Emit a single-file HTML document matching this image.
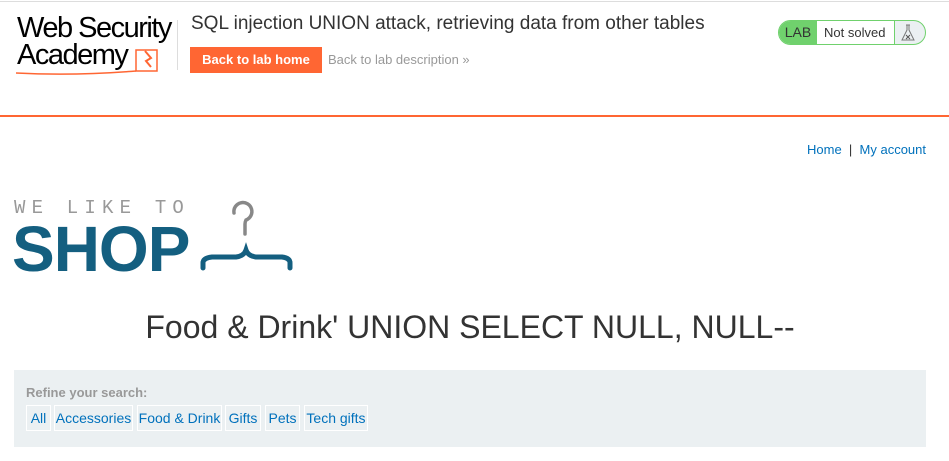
<!DOCTYPE html>
<html><head><style>
*{margin:0;padding:0;box-sizing:border-box}
body{width:949px;height:461px;overflow:hidden;background:#fff;font-family:"Liberation Sans",Arial,sans-serif;position:relative}
.abs{position:absolute}
.tag{position:absolute;top:405px;height:26px;border:1px solid #fff;color:#0071bc;font-size:14px;line-height:24px;text-align:center}
</style></head><body>
<div class="abs" style="left:0;top:1px;width:949px;height:1px;background:#ddd"></div>
<div class="abs" style="left:17px;top:15px;font-size:29px;line-height:27px;color:#000;letter-spacing:-1.5px">Web Security<br>Academy</div>
<svg class="abs" style="left:14px;top:46px" width="150" height="30"><path d="M122 4 L122 25 L143 25 L143 4 Z" fill="none" stroke="#ff6633" stroke-width="1.5"/><path d="M131 5 L137 12 L132 15 L137 21" fill="none" stroke="#ff6633" stroke-width="2"/><path d="M2 27 Q60 30 122 25" fill="none" stroke="#ff6633" stroke-width="1.5"/></svg>
<div class="abs" style="left:177px;top:20px;width:1px;height:50px;background:#ddd"></div>
<div class="abs" style="left:191px;top:13px;font-size:19px;color:#333">SQL injection UNION attack, retrieving data from other tables</div>
<div class="abs" style="left:190px;top:47px;width:132px;height:26px;background:#ff6633;color:#fff;font-weight:bold;font-size:13px;line-height:26px;text-align:center">Back to lab home</div>
<div class="abs" style="left:328px;top:52px;font-size:13px;color:#999">Back to lab description &#187;</div>
<div class="abs" style="left:778px;top:20px;width:148px;height:25px;border:1px solid #70d16d;border-radius:13px;overflow:hidden;background:#ebf0f2">
<div class="abs" style="left:0;top:0;width:38px;height:23px;background:#70d16d;color:#333;font-size:14px;line-height:23px;text-align:center">LAB</div>
<div class="abs" style="left:38px;top:0;width:78px;height:23px;background:#fff;border-right:1px solid #70d16d;color:#333;font-size:13px;line-height:23px;padding-left:7px">Not solved</div>
<svg class="abs" style="left:121px;top:3px" width="16" height="18"><path d="M6 1h4M7 1v5L2 16h12L9 6V1" fill="none" stroke="#777" stroke-width="1"/><path d="M6 11l4 4M10 11l-4 4" stroke="#555"/></svg>
</div>
<div class="abs" style="left:0;top:115px;width:949px;height:2px;background:#ff6633"></div>
<div class="abs" style="left:807px;top:142px;font-size:13px;color:#0071bc">Home &nbsp;<span style="color:#333">|</span>&nbsp; My account</div>
<div class="abs" style="left:14px;top:197px;font-family:'Liberation Mono',monospace;font-size:19px;letter-spacing:6.2px;color:#999">WE LIKE TO</div>
<div class="abs" style="left:12px;top:212px;font-weight:bold;font-size:64px;color:#145f80;letter-spacing:-1px">SHOP</div>
<svg class="abs" style="left:198px;top:200px" width="100" height="72"><path d="M36 13 A9 9 0 1 1 48 20 Q47 22 47 24 V34" fill="none" stroke="#888" stroke-width="3.5" stroke-linecap="round"/><path d="M5 68 V63 Q5 58 14 57 L38 57 Q46 56 48 50 Q50 56 58 57 L84 57 Q92 58 92 63 V68" fill="none" stroke="#145f80" stroke-width="5" stroke-linecap="round"/></svg>
<div class="abs" style="left:0;top:309px;width:940px;text-align:center;font-size:32px;color:#333">Food &amp; Drink' UNION SELECT NULL, NULL--</div>
<div class="abs" style="left:14px;top:370px;width:912px;height:77px;background:#ebf0f2"></div>
<div class="abs" style="left:26px;top:385px;font-size:13px;font-weight:bold;color:#999">Refine your search:</div>
<div class="tag" style="left:26px;width:25px">All</div>
<div class="tag" style="left:54px;width:79px">Accessories</div>
<div class="tag" style="left:137px;width:85px">Food &amp; Drink</div>
<div class="tag" style="left:225px;width:36px">Gifts</div>
<div class="tag" style="left:265px;width:35px">Pets</div>
<div class="tag" style="left:304px;width:64px">Tech gifts</div>
</body></html>
